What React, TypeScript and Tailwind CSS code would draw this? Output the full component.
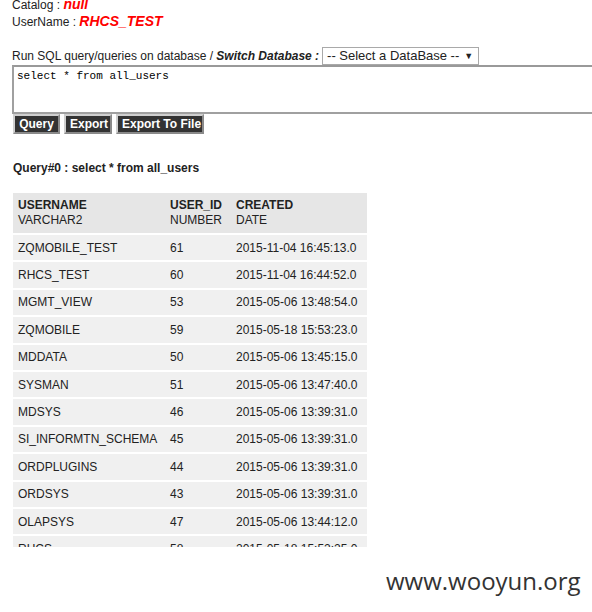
import React from "react";

interface UserRow {
  username: string;
  userId: string;
  created: string;
}

const rows: UserRow[] = [
  { username: "ZQMOBILE_TEST", userId: "61", created: "2015-11-04 16:45:13.0" },
  { username: "RHCS_TEST", userId: "60", created: "2015-11-04 16:44:52.0" },
  { username: "MGMT_VIEW", userId: "53", created: "2015-05-06 13:48:54.0" },
  { username: "ZQMOBILE", userId: "59", created: "2015-05-18 15:53:23.0" },
  { username: "MDDATA", userId: "50", created: "2015-05-06 13:45:15.0" },
  { username: "SYSMAN", userId: "51", created: "2015-05-06 13:47:40.0" },
  { username: "MDSYS", userId: "46", created: "2015-05-06 13:39:31.0" },
  { username: "SI_INFORMTN_SCHEMA", userId: "45", created: "2015-05-06 13:39:31.0" },
  { username: "ORDPLUGINS", userId: "44", created: "2015-05-06 13:39:31.0" },
  { username: "ORDSYS", userId: "43", created: "2015-05-06 13:39:31.0" },
  { username: "OLAPSYS", userId: "47", created: "2015-05-06 13:44:12.0" },
  { username: "RHCS", userId: "58", created: "2015-05-18 15:52:25.0" },
];

const buttonClass =
  "h-[20px] px-[4px] bg-[#333] text-white font-bold text-[12px] leading-[14px] whitespace-nowrap border-2 border-t-[#cfcfcf] border-l-[#cfcfcf] border-r-[#8a8a8a] border-b-[#8a8a8a]";

const App = () => {
  return (
    <div className="relative w-[592px] h-[612px] overflow-hidden bg-white text-[12px] text-[#222] font-['Liberation_Sans',Arial,sans-serif]">
      <div className="-mt-[4px] pl-[12px]">
        <div className="leading-[16px]">
          Catalog : <span className="text-[14px] font-bold italic text-[#ff0000]">null</span>
        </div>
        <div className="leading-[16px]">
          UserName : <span className="text-[14px] font-bold italic text-[#ff0000]">RHCS_TEST</span>
        </div>
      </div>

      <div className="mt-[17px] pl-[12px] flex items-end leading-[14px]">
        <span className="pb-[2px]">
          Run SQL query/queries on database / <b className="italic">Switch Database :</b>
        </span>
        <div className="ml-[3px] w-[157px] h-[18px] border border-[#a9a9a9] bg-white flex items-center justify-between pl-[4px] pr-[5px] text-[13px]">
          <span>-- Select a DataBase --</span>
          <span className="text-[9px]">▼</span>
        </div>
      </div>

      <div className="ml-[12px] w-[600px] h-[49px] border-2 border-[#a0a0a0] border-t-[#999] bg-white px-[3px] pt-[2px] font-['Liberation_Mono','Courier_New',monospace] text-[11px] leading-[14px] text-black">
        select * from all_users
      </div>

      <div className="ml-[13px] flex gap-[4px]">
        <button className={`${buttonClass} w-[47px]`}>Query</button>
        <button className={`${buttonClass} w-[48px]`}>Export</button>
        <button className={`${buttonClass} w-[88px]`}>Export To File</button>
      </div>

      <div className="mt-[27px] ml-[13px] font-bold leading-[14px]">
        Query#0 : select * from all_users
      </div>

      <div className="mt-[18px] ml-[13px] w-[354px] h-[354px] overflow-hidden flex flex-col gap-[2px]">
        <div className="flex h-[40px] shrink-0 bg-[#e6e6e6] items-center leading-[15px]">
          <div className="w-[152px] pl-[5px]">
            <div className="font-bold">USERNAME</div>
            <div>VARCHAR2</div>
          </div>
          <div className="w-[66px] pl-[5px]">
            <div className="font-bold">USER_ID</div>
            <div>NUMBER</div>
          </div>
          <div className="pl-[5px]">
            <div className="font-bold">CREATED</div>
            <div>DATE</div>
          </div>
        </div>
        {rows.map((row, index) => (
          <div key={index} className="flex h-[25.4px] shrink-0 bg-[#f0f0f0] items-center">
            <div className="w-[152px] pl-[5px]">{row.username}</div>
            <div className="w-[66px] pl-[5px]">{row.userId}</div>
            <div className="pl-[5px]">{row.created}</div>
          </div>
        ))}
      </div>

      <div className="absolute left-[386px] top-[566px] text-[24px] leading-[30px] text-[#333] font-['Open_Sans',sans-serif]">
        www.wooyun.org
      </div>
    </div>
  );
};

export default App;
